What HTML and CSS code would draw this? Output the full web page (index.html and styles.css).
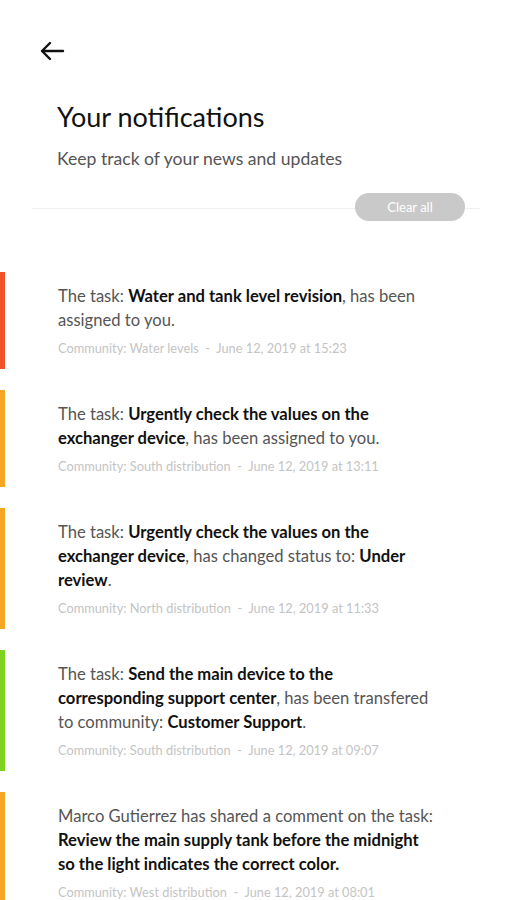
FILE: index.html
```html
<!DOCTYPE html>
<html>
<head>
<meta charset="utf-8">
<link rel="stylesheet" href="styles.css">
</head>
<body>
<div class="page">
  <header class="header">
    <button class="back" aria-label="Back">
      <svg width="26" height="22" viewBox="0 0 26 22"><path d="M24 11H3M11 3L3 11l8 8" fill="none" stroke="#111" stroke-width="2.4" stroke-linecap="round" stroke-linejoin="round"/></svg>
    </button>
    <h1 class="title">Your notifications</h1>
    <p class="subtitle">Keep track of your news and updates</p>
  </header>
  <div class="toolbar">
    <div class="rule"></div>
    <button class="clear">Clear all</button>
  </div>
  <ul class="list">
    <li class="card red">
      <p class="msg">The task: <b>Water and tank level revision</b>, has been assigned to you.</p>
      <p class="meta">Community: Water levels&nbsp; - &nbsp;June 12, 2019 at 15:23</p>
    </li>
    <li class="card amber">
      <p class="msg">The task: <b>Urgently check the values on the exchanger device</b>, has been assigned to you.</p>
      <p class="meta">Community: South distribution&nbsp; - &nbsp;June 12, 2019 at 13:11</p>
    </li>
    <li class="card amber">
      <p class="msg">The task: <b>Urgently check the values on the exchanger device</b>, has changed status to: <b>Under review</b>.</p>
      <p class="meta">Community: North distribution&nbsp; - &nbsp;June 12, 2019 at 11:33</p>
    </li>
    <li class="card green">
      <p class="msg">The task: <b>Send the main device to the corresponding support center</b>, has been transfered to community: <b>Customer Support</b>.</p>
      <p class="meta">Community: South distribution&nbsp; - &nbsp;June 12, 2019 at 09:07</p>
    </li>
    <li class="card amber">
      <p class="msg">Marco Gutierrez has shared a comment on the task: <b>Review the main supply tank before the midnight so the light indicates the correct color.</b></p>
      <p class="meta">Community: West distribution&nbsp; - &nbsp;June 12, 2019 at 08:01</p>
    </li>
  </ul>
</div>
</body>
</html>
```
FILE: styles.css
```css
html, body {
  margin: 0;
  padding: 0;
  background: #fff;
}
body {
  font-family: Lato, "Noto Sans", sans-serif;
  color: #555;
}
.page {
  width: 507px;
  height: 900px;
  overflow: hidden;
}
.header {
  padding: 40px 0 0 57px;
  display: flex;
  flex-direction: column;
}
.back {
  margin: 0 0 0 -18px;
  padding: 0;
  width: 26px;
  height: 22px;
  border: 0;
  background: none;
  display: flex;
}
.title {
  margin: 38px 0 0 0;
  font-size: 27px;
  font-weight: 400;
  color: #111;
  line-height: 34px;
}
.subtitle {
  margin: 14px 0 0 0;
  font-size: 17.6px;
  line-height: 22px;
  color: #555;
}
.toolbar {
  margin-top: 23px;
  height: 28px;
  position: relative;
  display: flex;
  align-items: center;
  justify-content: flex-end;
  padding-right: 42px;
}
.rule {
  position: absolute;
  left: 32px;
  right: 27px;
  top: 15px;
  height: 1px;
  background: #efefef;
}
.clear {
  position: relative;
  width: 110px;
  height: 28px;
  border: 0;
  border-radius: 14px;
  background: #c9c9c9;
  color: #fff;
  font-family: Lato, "Noto Sans", sans-serif;
  font-size: 13px;
  padding: 0;
}
.list {
  list-style: none;
  margin: 51px 0 0 0;
  padding: 0;
  display: flex;
  flex-direction: column;
  gap: 21px;
}
.card {
  border-left: 5px solid #f5a623;
  padding: 12px 0 12px 53px;
}
.card.red { border-left-color: #f0522a; }
.card.amber { border-left-color: #f5a623; }
.card.green { border-left-color: #7ed321; }
.msg {
  margin: 0;
  width: 376px;
  font-size: 16.6px;
  line-height: 24px;
  color: #555;
}
.msg b {
  color: #111;
  font-weight: 700;
}
.meta {
  margin: 7px 0 0 0;
  font-size: 12.8px;
  line-height: 18px;
  color: #c4c4c4;
}
```
